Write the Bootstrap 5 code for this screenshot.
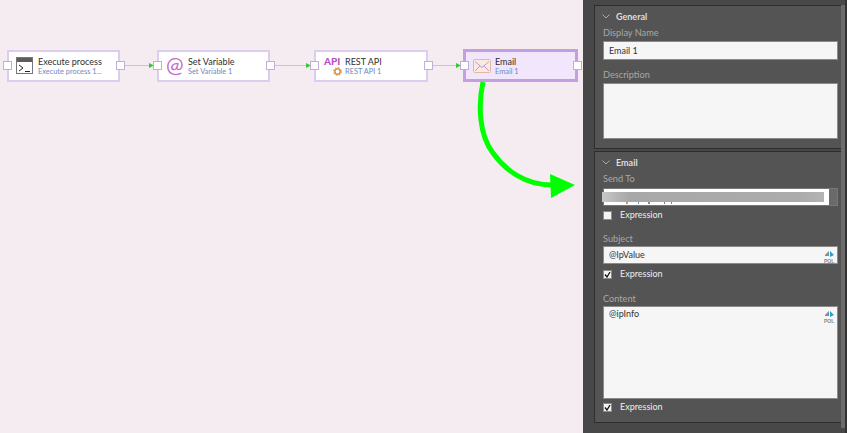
<!DOCTYPE html>
<html><head><meta charset="utf-8"><title>Flow</title>
<link href="https://cdn.jsdelivr.net/npm/bootstrap@5.3.0/dist/css/bootstrap.min.css" rel="stylesheet">
<style>
html,body{height:433px;overflow:hidden;margin:0}
body{font-family:Lato,"Noto Sans","Liberation Sans",sans-serif;font-size:9px;background:#f5ecf2}
.stage{width:847px;height:433px}
.canvas-area{width:583px;height:433px;position:relative;background:#f5ecf2;flex:none}
.flow-node{position:absolute;top:50px;width:113px;height:32px;background:#fff;border:2px solid #dccdef;color:#333}
.flow-node.sel{background:#f1e6fb;border:3px solid #c39fe2;width:115px;top:49px;height:33px}
.port{position:absolute;top:9px;width:9px;height:9px;background:#fff;border:1px solid #c2afd9}
.port.l{left:-6px}.port.r{right:-7px}
.node-ico{position:absolute;left:7px;top:5px}
.node-txt{position:absolute;left:29px;top:3px;line-height:13px;white-space:nowrap}
.node-txt .ttl{font-size:9px;color:#2f2f2f;line-height:13px}
.node-txt .sub{font-size:7.400px;color:#6f89c2;line-height:8px}
.wire{position:absolute;top:0;left:0}
.side{width:264px;height:433px;background:#484848;flex:none;position:relative;padding:5px 0 0 11px}
.sec{width:247px;border:1px solid #2d2d2d;border-right:0;background:#545454;color:#bdbdbd;padding:0 0 0 8px}
.sec-a{height:144px;margin-bottom:2px}
.sec-b{height:272px}
.sec-h{height:20px;padding-top:1px;color:#ddd;font-weight:700;font-size:9px;gap:6px;margin-left:-1px}
.fld-lbl{font-size:9.200px;color:#a8a8a8;line-height:13px}
.txtbox{width:235px;background:#f6f6f6;border:1px solid #8b8b8b;color:#333;font-size:9px;padding:0 5px;position:relative}
.h-gen{height:19px;line-height:17px;margin-top:2px}
.h-sub{height:18px;line-height:16px;margin-top:1px}
.desc{height:56px;margin-top:2px}
.send-wrap{width:235px;height:18px;border:1px solid #777;background:#6a6a6a;position:relative;margin-top:3px}
.send-white{width:225px;height:16px;background:#fff}
.blur-bar{position:absolute;left:-2px;top:3px;width:222px;height:10px;background:linear-gradient(90deg,#c8c8c8,#a8a8a8 12%,#acacac 90%,#b4b4b4);filter:blur(.6px)}
.tiny-bits{position:absolute;left:22px;top:13px}
.chk{width:9px;height:9px;background:#f4f4f4;border:1px solid #8b8b8b;display:flex;align-items:center;justify-content:center;flex:none}
.chk-row{color:#eee;font-size:9px;gap:8px;height:14px;margin-top:2px}
.chk-mid{margin-top:3px}
.chk-last{margin-top:1px}
.pql{position:absolute;right:2px;top:3px;width:11px;height:13px}
.big{height:93px;line-height:14px;margin-top:1px}
.lbl-gen2{margin-top:8px}
.lbl-sub{margin-top:10px}
.lbl-con{margin-top:11px}
.scroll{position:absolute;right:2px;top:5px;width:4px;height:423px;background:#6b6b6b}
.edge{position:absolute;right:0;top:0;width:2px;height:433px;background:#333}
.arrow{position:absolute;left:0;top:0;overflow:visible}
.ico-at{font-size:21px;font-weight:400;line-height:20px;color:#c56ccb;top:3px;left:7px}
.ico-api{font-size:10px;font-weight:900;line-height:11px;color:#b94fc4;top:4px;left:8px}
.ico-gear{left:17px;top:15px}
.ico-mail{left:7px;top:7px}
.pos-1{left:7px}.pos-2{left:157px}.pos-3{left:314px;width:114px}.pos-4{left:463px}
</style></head><body>
<div class="stage d-flex">
 <div class="canvas-area">
  <svg class="wire" width="583" height="100"><g stroke="#a9dca9" fill="none"><path d="M125 65.500H150M275 65.500H307M432 65.500H458"/></g><g fill="#37c837"><path d="M149 63l5 2.500-5 2.500zM306 63l5 2.500-5 2.500zM456 63l5 2.500-5 2.500z"/></g></svg>

  <div class="flow-node pos-1"><span class="port l"></span><span class="port r"></span>
   <svg class="node-ico" width="17" height="17" viewBox="0 0 17 17"><rect x=".5" y=".5" width="16" height="16" fill="#fff" stroke="#777"/><rect x="1" y="1" width="15" height="4" fill="#5c5c5c"/><path d="M3 8l4 3-4 3" fill="none" stroke="#222"/><path d="M9 14.500h5" stroke="#222"/></svg>
   <div class="node-txt"><div class="ttl">Execute process</div><div class="sub">Execute process 1...</div></div></div>

  <div class="flow-node pos-2"><span class="port l"></span><span class="port r"></span>
   <div class="node-ico ico-at">@</div>
   <div class="node-txt"><div class="ttl">Set Variable</div><div class="sub">Set Variable 1</div></div></div>

  <div class="flow-node pos-3"><span class="port l"></span><span class="port r"></span>
   <div class="node-ico ico-api">API</div>
   <svg class="node-ico ico-gear" width="9" height="9" viewBox="0 0 9 9"><circle cx="4.500" cy="4.500" r="2.700" fill="none" stroke="#e0923c" stroke-width="1.600"/><circle cx="4.500" cy="4.500" r="4" fill="none" stroke="#e0923c" stroke-dasharray="1.500 1.640"/></svg>
   <div class="node-txt"><div class="ttl">REST API</div><div class="sub">REST API 1</div></div></div>

  <div class="flow-node sel pos-4"><span class="port l"></span><span class="port r"></span>
   <svg class="node-ico ico-mail" width="18" height="14" viewBox="0 0 18 14"><rect x=".5" y=".5" width="17" height="13" rx="1" fill="#f8ebe4" stroke="#e3b89c"/><path d="M2 2.500l7 6 7-6M2 12l5-5M16 12l-5-5" fill="none" stroke="#cf90d8"/></svg>
   <div class="node-txt"><div class="ttl">Email</div><div class="sub">Email 1</div></div></div>

  <svg class="arrow" width="583" height="210"><path d="M483 82C478 105 479 135 493 153C505 170 525 185 552 185" fill="none" stroke="#00ff00" stroke-width="5"/><path d="M550 174L575 185L551 198Z" fill="#00ff00"/></svg>
 </div>

 <aside class="side">
  <section class="sec sec-a">
   <div class="sec-h d-flex align-items-center"><svg width="8" height="5" viewBox="0 0 8 5"><path d="M.5.500L4 4 7.500.500" fill="none" stroke="#aaa"/></svg><span>General</span></div>
   <div class="fld-lbl">Display Name</div>
   <div class="txtbox h-gen">Email 1</div>
   <div class="fld-lbl lbl-gen2">Description</div>
   <div class="txtbox desc"></div>
  </section>
  <section class="sec sec-b">
   <div class="sec-h d-flex align-items-center"><svg width="8" height="5" viewBox="0 0 8 5"><path d="M.5.500L4 4 7.500.500" fill="none" stroke="#aaa"/></svg><span>Email</span></div>
   <div class="fld-lbl">Send To</div>
   <div class="send-wrap"><div class="send-white"></div><div class="blur-bar"></div>
    <svg class="tiny-bits" width="60" height="2"><path d="M0 0h2v2H0z" fill="#c79a6a"/><path d="M12 0h1v2h-1z" fill="#7a8fc8"/><path d="M22 0h2v2h-2z" fill="#b070b8"/><path d="M38 0h1v2h-1z" fill="#777"/><path d="M45 0h1v2h-1z" fill="#6a80c0"/></svg></div>
   <div class="chk-row d-flex align-items-center"><span class="chk"></span><span>Expression</span></div>
   <div class="fld-lbl lbl-sub">Subject</div>
   <div class="txtbox h-sub">@lpValue
    <svg class="pql" viewBox="0 0 11 13"><path d="M1 5L5 1V6H1Z" fill="#8a8a8a"/><path d="M6 1L10 5 6 7Z" fill="#19a7d6"/><text x="0" y="12.500" font-size="5" font-weight="700" fill="#888" font-family="Liberation Sans,sans-serif">PQL</text></svg></div>
   <div class="chk-row chk-mid d-flex align-items-center"><span class="chk"><svg width="7" height="7" viewBox="0 0 7 7"><path d="M1 3.500L3 6 6 1" fill="none" stroke="#111" stroke-width="1.300"/></svg></span><span>Expression</span></div>
   <div class="fld-lbl lbl-con">Content</div>
   <div class="txtbox big">@ipInfo
    <svg class="pql" viewBox="0 0 11 13"><path d="M1 5L5 1V6H1Z" fill="#8a8a8a"/><path d="M6 1L10 5 6 7Z" fill="#19a7d6"/><text x="0" y="12.500" font-size="5" font-weight="700" fill="#888" font-family="Liberation Sans,sans-serif">PQL</text></svg></div>
   <div class="chk-row chk-last d-flex align-items-center"><span class="chk"><svg width="7" height="7" viewBox="0 0 7 7"><path d="M1 3.500L3 6 6 1" fill="none" stroke="#111" stroke-width="1.300"/></svg></span><span>Expression</span></div>
  </section>
  <div class="scroll"></div><div class="edge"></div>
 </aside>
</div>
</body></html>
